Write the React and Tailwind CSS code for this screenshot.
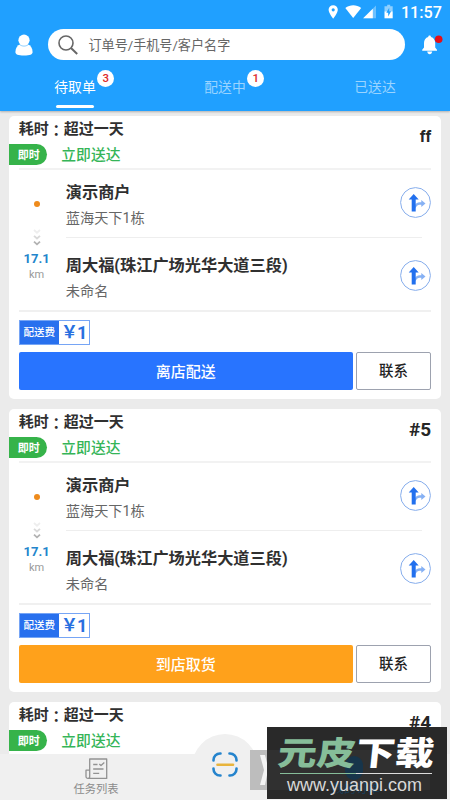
const FONT = "font-['Roboto','Noto_Sans_CJK_SC',sans-serif]";

function StatusIcons() {
  return (
    <svg className="h-[16px] w-[67px] shrink-0" viewBox="0 0 67 16" fill="#fff">
      <path fillRule="evenodd" d="M5.2 1.2a4.6 4.6 0 0 0-4.6 4.6c0 3.2 4.6 8.9 4.6 8.9s4.6-5.700 4.600-8.900a4.600 4.600 0 0 0-4.600-4.600zm0 3a1.600 1.600 0 1 1 0 3.200 1.600 1.600 0 0 1 0-3.200z" />
      <path d="M17.300 4.100c4.700-3.800 11.200-3.800 15.900 0L25.200 14.100z" />
      <path d="M48 1.500v12.800H35.200z" opacity="0.35" />
      <path d="M44.800 4.700v9.600h-9.600z" />
      <path d="M59.200 .8h3v1.500h2.500v5h-8.200v-5h2.700z" opacity="0.5" />
      <path d="M56.500 7.300h8.200v7h-8.200z" />
      <path d="M61.200 3.800l-2.900 5h1.900v3.700l2.900-5.200h-1.900z" fill="#20a0ff" />
    </svg>
  );
}

function UserIcon() {
  return (
    <svg className="h-[22px] w-[18px]" viewBox="0 0 18 22" fill="#fff">
      <circle cx="9" cy="6.200" r="5.600" />
      <path d="M5.300 10.300h7.400c2.800 1 4.900 3.600 4.900 7.700 0 2.400-2.600 3.500-8.600 3.500S.4 20.400.4 18c0-4.100 2.100-6.700 4.900-7.700z" />
      <path d="M4.600 10.600c2.700 2 6.100 2 8.800 0" fill="none" stroke="#20a0ff" strokeWidth="0.500" />
    </svg>
  );
}

function BellIcon() {
  return (
    <svg className="h-[22px] w-[22px]" viewBox="0 0 22 22">
      <path d="M8.600 1.600c.8 0 1.200.5 1.400 1.300 2.700.7 4.200 3 4.200 6v4.600l1.800 2.300v1H1.200v-1L3 13.500V8.900c0-3 1.500-5.300 4.200-6 .2-.8.6-1.300 1.400-1.300z" fill="#fff" />
      <path d="M6.200 17.600h5c-.2 1.600-1.200 2.700-2.500 2.700s-2.300-1.100-2.500-2.700z" fill="#fff" />
      <circle cx="17.700" cy="5.200" r="3.800" fill="#e60f17" />
    </svg>
  );
}

function RouteIcon() {
  return (
    <svg className="h-[31px] w-[31px] shrink-0" viewBox="0 0 31 31">
      <circle cx="15.500" cy="15.500" r="14.900" fill="#fff" stroke="#86adec" strokeWidth="1" />
      <path d="M15 21.500v-2.500c0-2.400 2.300-3.700 5-3.700h1.300v-2.300l4.200 3.500-4.200 3.500v-2.200h-1.600c-1.800 0-2.700.8-4.700 3.700z" fill="#86b1f4" />
      <path d="M13.700 7l5 5.500h-3V24.500h-4V12.500h-3z" fill="#2270ee" />
    </svg>
  );
}

function Chevrons() {
  return (
    <svg className="h-[19px] w-[8px]" viewBox="0 0 8 19" fill="none" strokeWidth="1.800">
      <path d="M1 2l3 2.700L7 2" stroke="#eeeeee" />
      <path d="M1 7.800l3 2.700 3-2.700" stroke="#d9d9d9" />
      <path d="M1 13.600l3 2.700 3-2.700" stroke="#b2b2b2" />
    </svg>
  );
}

function TaskIcon() {
  return (
    <svg className="h-[22px] w-[23px]" viewBox="0 0 23 22" fill="none" stroke="#929292" strokeWidth="1.300" strokeLinejoin="round">
      <path d="M4.700 12.200V1h17v19.400H3c-1.200 0-2-.8-2-2v-6.200h3.700v6.200c0 1.200-.6 2-1.700 2" />
      <path d="M8.200 6.500h4.300M8.200 11h10.300M8.200 15.300h6" />
      <path d="M14.300 6l1.700 1.600L19.300 4.600" />
    </svg>
  );
}

function ScanIcon() {
  return (
    <svg className="h-[25px] w-[26px]" viewBox="0 0 26 25" fill="none" strokeWidth="2.600" strokeLinecap="round">
      <path d="M8.500 1.500H8A6.500 6.500 0 0 0 1.500 8v.5M17.500 1.500h.5A6.500 6.500 0 0 1 24.500 8v.5M1.500 16.500v.5A6.500 6.500 0 0 0 8 23.500h.5M24.500 16.500v.5a6.500 6.500 0 0 1-6.500 6.500h-.5" stroke="#2584cd" />
      <path d="M5.500 12.700h15.500" stroke="#e8b43c" />
    </svg>
  );
}

function Tab({ label, count, active }) {
  return (
    <div className="flex w-[150px] flex-col items-center">
      <div className={`relative text-[13.8px] leading-[20px] ${active ? "text-white" : "text-[#9bd4ff]"}`}>
        {label}
        {count && (
          <span className="absolute -top-[7px] left-[43px] flex h-[17px] w-[17px] items-center justify-center rounded-full bg-white text-[11.5px] font-medium leading-none text-[#dd2a2a]">
            {count}
          </span>
        )}
      </div>
      {active && <div className="mt-[8px] h-[2.500px] w-[38px] rounded-full bg-white" />}
    </div>
  );
}

function Stop({ name, address }) {
  return (
    <div className="flex items-start justify-between">
      <div>
        <div className="text-[16.2px] font-bold leading-[26px] text-[#303030]">{name}</div>
        <div className="text-[14.2px] leading-[25px] text-[#666]">{address}</div>
      </div>
      <div className="pt-[7px]"><RouteIcon /></div>
    </div>
  );
}

function CardHeader({ code, small }) {
  return (
    <div className="flex h-[52.500px] justify-between pr-[9.500px]">
      <div>
        <div className="flex h-[28px] pl-[9.500px] text-[15px] font-bold leading-[27px] text-[#303030]">
          <span>耗时</span>
          <span className="font-['Noto_Sans_CJK_TC',sans-serif]">：</span>
          <span>超过一天</span>
        </div>
        <div className="flex items-center">
          <span className="flex h-[21px] w-[38px] items-center rounded-r-full bg-[#36b34a] pl-[8.500px] pt-[2px] text-[11px] font-bold leading-[19px] text-white">即时</span>
          <span className="ml-[14px] pt-[2px] text-[14.8px] font-medium leading-[19px] text-[#35b558]">立即送达</span>
        </div>
      </div>
      <div className={`pt-[9.500px] font-bold leading-[24px] text-[#262626] ${small ? "text-[16px]" : "text-[19px]"}`}>{code}</div>
    </div>
  );
}

function OrderCard({ code, small, action, orange }) {
  return (
    <section className="h-[283.500px] shrink-0 rounded-[5px] bg-white">
      <CardHeader code={code} small={small} />
      <div className="mx-[9.500px] h-[1.500px] bg-[#f2f2f2]" />
      <div className="flex h-[140.500px] pr-[9.500px]">
        <div className="flex w-[56.500px] shrink-0 flex-col items-center pr-[2px] pt-[31px]">
          <div className="h-[6px] w-[6px] rounded-full bg-[#ee8b1c]" />
          <div className="mt-[21px] flex"><Chevrons /></div>
          <div className="mt-[4px] text-[13px] font-bold leading-[16px] text-[#2385cc]">17.1</div>
          <div className="text-[11px] leading-[16px] text-[#999]">km</div>
        </div>
        <div className="grow">
          <div className="h-[67px] pt-[10.500px]"><Stop name="演示商户" address="蓝海天下1栋" /></div>
          <div className="mr-[9px] h-[1px] bg-[#eee]" />
          <div className="h-[72.500px] pt-[15.500px]"><Stop name="周大福(珠江广场光华大道三段)" address="未命名" /></div>
        </div>
      </div>
      <div className="mx-[9.500px] h-[1.500px] bg-[#f0f0f0]" />
      <div className="px-[9.500px] pt-[8px]">
        <div className="flex h-[25px] w-[71.500px] border border-[#76a5f5]">
          <div className="flex w-[39px] items-center justify-center bg-[#2870ee] pt-[2px] text-[10.5px] font-medium leading-[20px] text-white">配送费</div>
          <div className="flex grow items-center justify-center text-[18px] font-bold leading-[23px] text-[#2870df]"><span className="text-[17px]">￥</span><span className="-ml-[1px]">1</span></div>
        </div>
        <div className="mt-[7px] flex h-[38px] gap-[3px]">
          <div className={`flex w-[334px] items-center justify-center rounded-[2px] pt-[2px] text-[15px] font-medium text-white ${orange ? "bg-[#ffa11b]" : "bg-[#2874ff]"}`}>{action}</div>
          <div className="flex grow items-center justify-center rounded-[2px] border border-[#9da2af] pt-[2px] text-[14.5px] font-medium text-[#222]">联系</div>
        </div>
      </div>
    </section>
  );
}

function Watermark() {
  return (
    <div className="absolute left-[267px] top-[727px] h-[72px] w-[180px] overflow-hidden bg-[#292929]">
      <div className="absolute left-0 top-[23px] h-[40px] w-[163px] bg-[#303030]" />
      <div className="absolute left-[78px] top-[29px] h-[24px] w-[18px] rounded-full bg-[#17354b]" />
      <div className="absolute left-[65px] top-[55px] whitespace-nowrap text-[12px] leading-[15px] text-[#183c56]">我的订单</div>
      <div className="absolute left-[11px] top-[8px] origin-center -skew-x-[5deg] scale-y-[0.84] whitespace-nowrap text-[39px] font-black leading-[38px] text-white">
        <span className="text-[#86bd99]">元皮</span>下载
      </div>
      <div className="absolute left-[13px] top-[46px] flex h-[1px] w-[152px]">
        <div className="w-[76px] bg-[#86bd99]" /><div className="grow bg-[#ddd]" />
      </div>
      <div className="absolute left-[20px] top-[49px] whitespace-nowrap font-['Liberation_Sans',sans-serif] text-[18px] leading-[19px] text-[#d8d8d8]">www.yuanpi.com</div>
    </div>
  );
}

export default function App() {
  return (
    <div className={`relative flex h-[800px] w-[450px] flex-col overflow-hidden bg-[#ebebeb] ${FONT}`}>
      <header className="h-[111px] shrink-0 bg-[#20a0ff] shadow-[0_1px_2px_rgba(0,0,0,0.25)]">
        <div className="flex h-[29px] justify-end pr-[8px] pt-[4px]">
          <StatusIcons />
          <span className="ml-[6px] text-[16.200px] font-medium leading-[17px] text-white">11:57</span>
        </div>
        <div className="flex h-[31px] items-center pl-[15px]">
          <UserIcon />
          <div className="ml-[15px] flex h-[31px] w-[357px] items-center rounded-full bg-white pl-[10px]">
            <svg className="h-[20px] w-[20px]" viewBox="0 0 20 20" fill="none" stroke="#666" strokeWidth="1.600">
              <circle cx="8" cy="8" r="7" /><path d="M13 13l6.200 6" strokeWidth="2" />
            </svg>
            <span className="ml-[10.500px] pt-[2px] text-[13.100px] text-[#666]">订单号/手机号/客户名字</span>
          </div>
          <div className="ml-[16px]"><BellIcon /></div>
        </div>
        <nav className="flex pt-[17px]">
          <Tab label="待取单" count="3" active />
          <Tab label="配送中" count="1" />
          <Tab label="已送达" />
        </nav>
      </header>
      <main className="flex min-h-0 grow flex-col gap-[9.500px] overflow-hidden px-[9.300px] pt-[4.800px]">
        <OrderCard code="ff" small action="离店配送" />
        <OrderCard code="#5" action="到店取货" orange />
        <section className="grow rounded-t-[5px] bg-white"><CardHeader code="#4" /></section>
      </main>
      <footer className="relative flex h-[46px] shrink-0 bg-[#f0f0f0]">
        <div className="flex w-[192px] flex-col items-center pt-[3.500px]">
          <TaskIcon />
          <span className="mt-[1px] text-[11.300px] leading-[18px] text-[#8b8b8b]">任务列表</span>
        </div>
        <div className="absolute left-[192px] top-[-20px] flex h-[66px] w-[66px] justify-center rounded-full bg-[#f0f0f0] pt-[17.500px]"><ScanIcon /></div>
        <div className="absolute left-[250px] top-[-4px] h-[40px] w-[180px] overflow-hidden bg-[#bdbdbd]">
          <svg className="h-[40px] w-[30px]" viewBox="0 0 30 40">
            <path d="M10 5h5l3 12v3L15 35h-5l4-15z" fill="#f4f4f4" />
          </svg>
        </div>
      </footer>
      <Watermark />
    </div>
  );
}
